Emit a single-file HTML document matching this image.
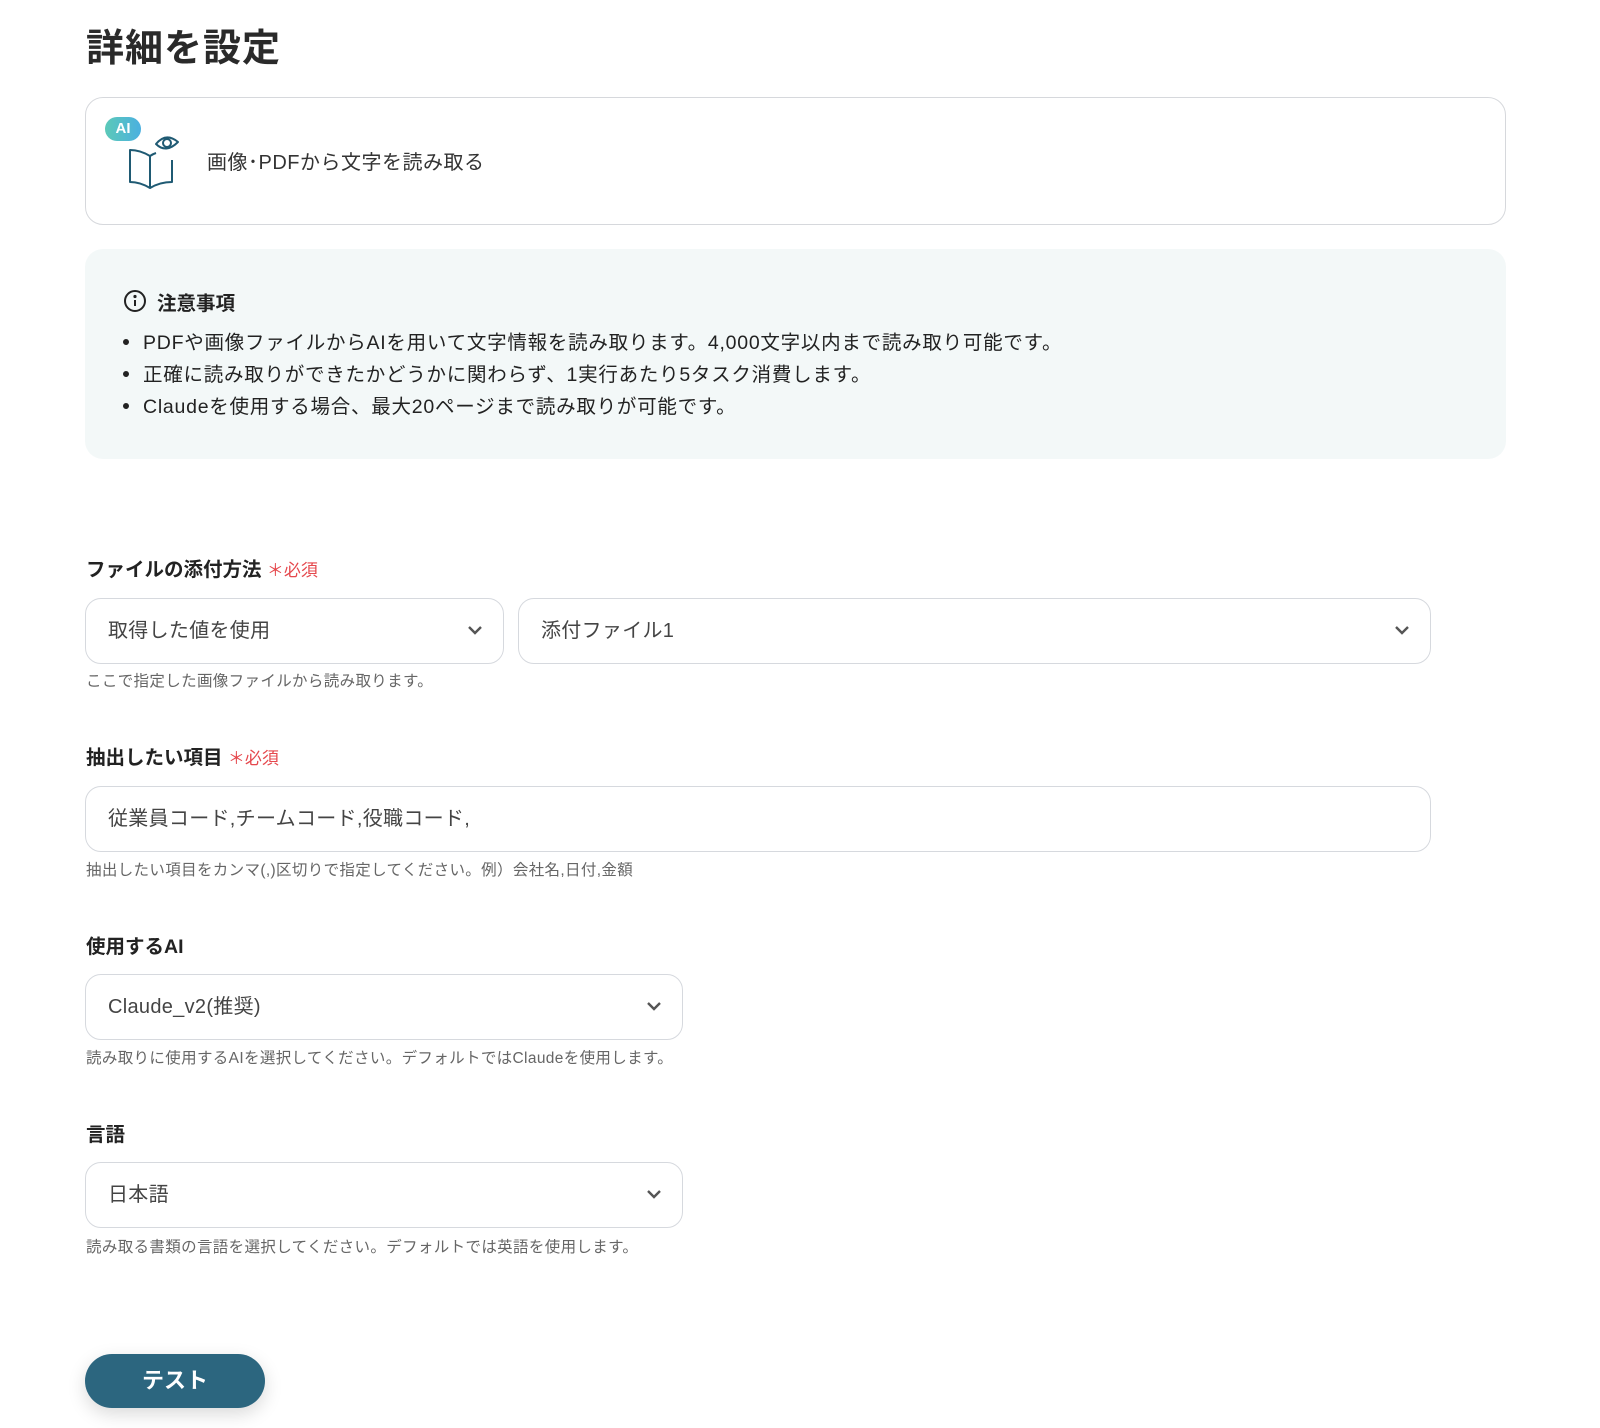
<!DOCTYPE html>
<html><head><meta charset="utf-8"><style>
*{box-sizing:border-box;margin:0;padding:0}
body{width:1600px;height:1428px;background:#fff;font-family:"Liberation Sans","Noto Sans CJK JP",sans-serif;color:#222;position:relative;overflow:hidden}
.a{position:absolute}
h1{position:absolute;left:86px;top:17px;font-size:38px;font-weight:700;color:#2a2a2a;letter-spacing:1px}
.card{left:85px;top:97px;width:1421px;height:128px;border:1px solid #d6d8dc;border-radius:18px}
.note{left:85px;top:249px;width:1421px;height:210px;background:#f3f8f8;border-radius:18px}
.note .t{position:absolute;left:72px;top:38px;font-size:19.5px;font-weight:700;color:#222}
.note ul{position:absolute;left:38px;top:78px;font-size:19.5px;line-height:32px;color:#222;list-style:none;letter-spacing:.75px}
.note li:before{content:"";display:inline-block;width:6px;height:6px;border-radius:50%;background:#222;margin-right:14px;vertical-align:middle;position:relative;top:-2px}
.lbl{font-size:19.5px;font-weight:700;color:#222;left:86px}
.req{color:#e5484d;font-weight:400;font-size:17px}
.box{border:1px solid #d6d9de;border-radius:16px;height:66px;font-size:20px;color:#444;padding-left:22px;line-height:64px;letter-spacing:.3px}
.chev{position:absolute;right:20px;top:26px;width:16px;height:10px}
.hint{font-size:15.5px;color:#666;left:86px;letter-spacing:.35px}
.btn{left:85px;top:1354px;width:180px;height:54px;border-radius:27px;background:#2c667f;color:#fff;font-size:22px;font-weight:700;text-align:center;line-height:54px;box-shadow:0 6px 18px rgba(0,0,0,.15)}
</style></head><body>
<h1>詳細を設定</h1>
<div class="a card">
 <div class="a" style="left:19px;top:19px;width:36px;height:24px;border-radius:12px;background:linear-gradient(90deg,#5cc9b8,#4bb0e0);color:#fff;font-size:15px;font-weight:700;text-align:center;line-height:24px">AI</div>
 <svg class="a" style="left:40px;top:32px" width="54" height="62" viewBox="0 0 54 62" fill="none" stroke="#1f5a73" stroke-width="2" stroke-linejoin="round">
  <path d="M4 20 V52 Q14 52 24 58 V26 Q14 20 4 20Z"/>
  <path d="M24 58 Q34 52 46 52 V30"/><path d="M24 26 Q27 24 30 23"/>
  <path d="M30 14 Q40 2 52 12 Q40 24 30 14Z"/><circle cx="41" cy="13" r="4"/>
 </svg>
 <div class="a" style="left:121px;top:48px;font-size:20px;color:#333;letter-spacing:.5px">画像･PDFから文字を読み取る</div>
</div>
<div class="a note">
 <svg class="a" style="left:38px;top:40px" width="24" height="24" viewBox="0 0 24 24" fill="none" stroke="#222" stroke-width="2"><circle cx="12" cy="12" r="10"/><path d="M12 11v6"/><circle cx="12" cy="7.5" r=".6" fill="#222"/></svg>
 <div class="t">注意事項</div>
 <ul><li>PDFや画像ファイルからAIを用いて文字情報を読み取ります。4,000文字以内まで読み取り可能です。</li><li>正確に読み取りができたかどうかに関わらず、1実行あたり5タスク消費します。</li><li>Claudeを使用する場合、最大20ページまで読み取りが可能です。</li></ul>
</div>

<div class="a lbl" style="top:553px">ファイルの添付方法 <span class="req">＊必須</span></div>
<div class="a box" style="left:85px;top:598px;width:419px">取得した値を使用<svg class="chev" viewBox="0 0 16 10"><path d="M2 2l6 6 6-6" stroke="#555" stroke-width="2.4" fill="none"/></svg></div>
<div class="a box" style="left:518px;top:598px;width:913px">添付ファイル1<svg class="chev" viewBox="0 0 16 10"><path d="M2 2l6 6 6-6" stroke="#555" stroke-width="2.4" fill="none"/></svg></div>
<div class="a hint" style="top:669px">ここで指定した画像ファイルから読み取ります。</div>

<div class="a lbl" style="top:741px">抽出したい項目 <span class="req">＊必須</span></div>
<div class="a box" style="left:85px;top:786px;width:1346px">従業員コード,チームコード,役職コード,</div>
<div class="a hint" style="top:858px">抽出したい項目をカンマ(,)区切りで指定してください。例）会社名,日付,金額</div>

<div class="a lbl" style="top:930px">使用するAI</div>
<div class="a box" style="left:85px;top:974px;width:598px">Claude_v2(推奨)<svg class="chev" viewBox="0 0 16 10"><path d="M2 2l6 6 6-6" stroke="#555" stroke-width="2.4" fill="none"/></svg></div>
<div class="a hint" style="top:1046px">読み取りに使用するAIを選択してください。デフォルトではClaudeを使用します。</div>

<div class="a lbl" style="top:1118px">言語</div>
<div class="a box" style="left:85px;top:1162px;width:598px">日本語<svg class="chev" viewBox="0 0 16 10"><path d="M2 2l6 6 6-6" stroke="#555" stroke-width="2.4" fill="none"/></svg></div>
<div class="a hint" style="top:1235px">読み取る書類の言語を選択してください。デフォルトでは英語を使用します。</div>

<div class="a btn">テスト</div>
</body></html>
